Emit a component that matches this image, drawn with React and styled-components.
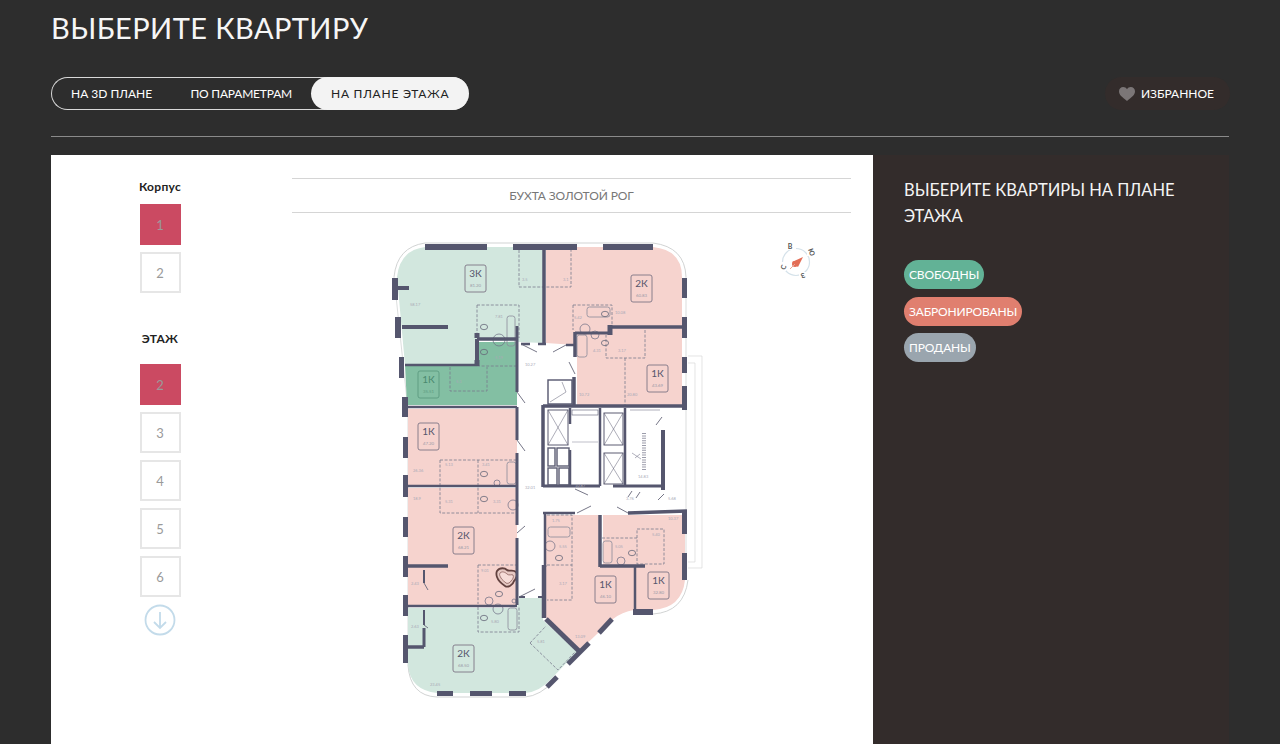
import React from "react";
import styled, { createGlobalStyle } from "styled-components";

const Global = createGlobalStyle`
  html, body { margin: 0; padding: 0; background: #2d2d2d; overflow: hidden; }
  * { box-sizing: border-box; }
  body { font-family: "Lato", "Noto Sans", "Liberation Sans", sans-serif; }
`;
const Page = styled.div`height: 744px; padding: 0 51px; overflow: hidden; color: #fff;`;
const Title = styled.h1`margin: 0; padding-top: 9px; height: 77px; font-size: 29px; line-height: 37px; font-weight: 400; letter-spacing: .42px; color: #f6f6f6;`;
const TopBar = styled.div`display: flex; justify-content: space-between; height: 60px; border-bottom: 1px solid #8a8a8a;`;
const Tabs = styled.div`display: flex; height: 33px; width: 418px; border: 1px solid #d8d8d8; border-right: none; border-radius: 17px;`;
const Tab = styled.div`
  display: flex; align-items: center; height: 33px; margin-top: -1px; font-size: 12px; white-space: nowrap;
  padding: 0 ${p => p.$active ? "20px" : "19px"};
  ${p => p.$first && "width: 120px;"}
  ${p => p.$mid && "width: 140px; letter-spacing: -.2px;"}
  ${p => p.$active && "background: #f3f3f3; color: #222; border-radius: 17px; width: 158px; letter-spacing: .75px;"}
`;
const Fav = styled.div`display: flex; align-items: center; gap: 6px; height: 33px; padding: 0 16px 0 14px; margin-right: -1px; border-radius: 17px; background: #332c2b; font-size: 12px;`;
const Body = styled.div`display: flex; margin-top: 18px; height: 589px;`;
const White = styled.div`display: flex; flex: none; width: 822px; background: #fff; padding-top: 23px;`;
const Side = styled.div`width: 218px; display: flex; flex-direction: column; align-items: center;`;
const SideTitle = styled.div`color: #222; font-size: 12px; font-weight: 700; line-height: 18px; margin-bottom: ${p => p.$mb}px; letter-spacing: .3px;`;
const Num = styled.div`
  width: 41px; height: 41px; margin-bottom: 7px; display: flex; align-items: center; justify-content: center;
  font-size: 13px; color: #9a9a9a;
  ${p => p.$active ? "background: #cb4a62;" : "border: 2px solid #e6e6e6; background: #fff;"}
`;
const Gap = styled.div`height: 30px;`;
const Arrow = styled.svg`display: block;`;
const PlanCol = styled.div`margin-left: 23px; width: 559px;`;
const PlanHead = styled.div`height: 35px; margin-bottom: 17px; display: flex; align-items: center; justify-content: center; border-top: 1px solid #d5d5d5; border-bottom: 1px solid #d5d5d5; color: #777; font-size: 12px; letter-spacing: -.1px;`;
const PlanSvg = styled.svg`display: block; margin-left: 88px;`;
const Info = styled.div`flex: 1; min-width: 0; background: #332c2b; padding: 22px 31px;`;
const InfoTitle = styled.div`font-size: 16.5px; line-height: 26px; font-weight: 400; width: 285px; color: #f4f4f4;`;
const Statuses = styled.div`display: flex; flex-direction: column; align-items: flex-start; gap: 7.5px; margin-top: 31px;`;
const Status = styled.div`height: 29px; display: flex; align-items: center; padding: 0 5px; border-radius: 15px; font-size: 12px; letter-spacing: -.15px; color: #fff; background: ${p => p.$c};`;

const rooms = [
  ["M397 277 Q400 250 425 247 L543 247 L543 343 L477 340 L477 365 L405 365 Z", "#d2e7de"],
  ["M477 342 L517 342 L517 405 L407 405 L405 365 L477 365 Z", "#83bfa3"],
  ["M546 247 L653 247 Q682 250 682 277 L682 327 L610 327 L610 332 L575 332 L575 345 L546 343 Z", "#f6d3ce"],
  ["M577 333 L610 333 L610 328 L682 328 L682 405 L577 405 Z", "#f6d3ce"],
  ["M408 409 L517 409 L517 485 L408 485 Z", "#f6d3ce"],
  ["M408 488 L517 488 L517 605 L408 605 Z", "#f6d3ce"],
  ["M408 608 L517 608 L519 598 L543 598 L543 620 L577 652 L553 677 Q540 692 525 693 L437 693 Q410 690 408 665 Z", "#d2e7de"],
  ["M546 515 L600 515 L600 567 L634 567 L634 610 Q622 612 613 619 L580 650 L546 618 Z", "#f6d3ce"],
  ["M603 515 L685 515 L685 580 Q682 608 653 610 L635 610 L635 567 L603 565 Z", "#f6d3ce"],
];
const blocks = [
  [425,244,62,6],[513,244,64,6],[603,244,50,6],[392,278,6,22],[395,317,6,21],[399,357,5,21],[402,397,6,20],[403,437,5,21],
  [403,475,5,22],[403,517,5,20],[403,556,5,21],[403,595,5,21],[403,635,5,28],[437,691,16,5],[470,691,22,5],[509,691,17,5],
  [633,609,20,6],[682,278,5,20],[682,317,5,21],[682,357,5,16],[682,386,5,24],[682,510,5,24],[682,553,5,27],
];
const diagBlocks = [[547,687,557,677],[568,664,589,643],[599,633,612,619]];
const walls = [
  [544,250,544,343,3.5],[398,288,409,288,4],[402,327,448,327,4],[405,365,477,365,2.5],[477,339,477,365,4],[477,339,517,339,3.5],
  [517,326,517,392,3],[517,407,517,440,3],[517,453,517,525,3],[517,538,517,605,3],[407,407,517,407,2.5],[408,486,517,486,2.5],
  [408,566,448,566,3.5],[408,606,517,606,2.5],[408,647,424,647,3.5],[424,628,424,647,3],[610,327,682,327,3.5],[575,333,610,333,3],
  [575,332,575,357,3.5],[574,377,574,405,3.5],[543,406,687,406,3.5],[543,405,543,487,3.5],[543,486,600,486,3],[613,486,663,486,3],
  [663,430,663,490,4],[625,408,625,486,2.5],[570,408,570,424,2.5],[600,408,600,486,2.5],[570,450,570,486,2.5],
  [543,513,575,513,2.5],[545,513,545,567,2.5],[544,565,544,618,4.5],[546,619,580,652,5],[600,515,600,567,3.5],[600,566,645,566,3.5],
  [635,567,635,610,2.5],[628,513,687,511,3.5],[521,344,530,344,2.5],[538,344,546,344,2.5],[566,345,575,345,2.5],[519,597,525,597,2],[538,597,543,597,2],
  [424,570,424,583,2],[424,610,424,625,2],[610,325,610,335,5],[477,333,477,338,5],[477,366,477,360,5],
];
const doors = [
  [521,344,537,352],[566,345,553,352],[569,362,575,374],[517,392,525,403],[517,440,525,451],[517,533,525,526],[519,597,535,589],
  [424,583,428,590],[424,625,428,628],[628,513,617,507],[577,513,591,506],[575,489,588,495],[628,497,632,491],[636,498,640,492],
  [658,500,664,494],[656,425,662,417],
];
const dashes = [
  "M519 250V287H571V250","M477 305H519V338M477 305V338","M573 305H612V327M573 305V330","M645 330V358H606V335","M625 358V405",
  "M450 367V391H487V367","M477 366H517","M440 460V513H517M440 460H517M478 460V513","M478 565H517M478 565V604","M478 607V632H519V607",
  "M530 643L546 626M530 643L558 670L575 652","M547 515H572V600H547M547 565H572","M602 538H637M637 529H664V564H637V529",
];
const tubs = [[507,316,8,30],[587,307,23,10],[577,335,10,22],[507,462,9,22],[548,527,22,10],[603,541,9,22],[508,608,9,22]];
const toilets = [[484,327],[605,343],[484,352],[484,474],[484,499],[499,594],[484,618],[559,558],[632,553],[605,314]];
const sinks = [[499,340,6],[585,329,5],[595,335,4],[497,483,3],[513,505,5],[550,546,5],[621,561,4],[489,601,4],[498,609,5],[514,601,2]];
const aptBadges = [
  [465,265,"3К","81.20",0],[631,275,"2К","60.83",0],[647,365,"1К","43.69",0],[418,371,"1К","35.51",1],[418,423,"1К","47.20",0],
  [453,527,"2К","68.21",0],[453,645,"2К","68.50",0],[595,576,"1К","46.10",0],[648,572,"1К","32.80",0],
];
const labels = [
  [410,306,"58.17"],[495,318,"7.81"],[495,359,"5.19"],[456,383,"5.3"],[525,366,"10.27"],[522,281,"3.5"],[563,281,"3.1"],[574,319,"5.42"],
  [615,314,"10.08"],[593,352,"4.31"],[618,352,"3.17"],[579,396,"10.72"],[627,396,"20.80"],[413,472,"26.36"],[445,466,"5.13"],[482,466,"3.41"],
  [413,500,"18.9"],[445,503,"5.31"],[493,503,"3.31"],[525,489,"32.01"],[481,572,"9.01"],[411,585,"2.43"],[411,628,"2.63"],[491,623,"5.80"],
  [430,686,"23.45"],[537,643,"5.81"],[575,487,"10.87"],[638,478,"14.83"],[552,522,"1.75"],[559,548,"5.55"],[559,585,"3.17"],[575,638,"13.09"],
  [626,500,"3.76"],[668,500,"5.68"],[668,520,"10.37"],[615,548,"5.05"],[652,536,"5.40"],
];

const Plan = () => (
  <PlanSvg width="450" height="480" viewBox="380 230 450 480" xmlns="http://www.w3.org/2000/svg">
    <path d="M394 277 Q397 247 425 243 L653 243 Q685 247 686 277 M408 665 Q410 696 437 697 L525 697 Q540 696 555 680 M636 614 L653 614 Q684 612 688 580" fill="none" stroke="#c5c8c8" strokeWidth=".8" />
    <path d="M394 277L408 410V665M686 277V580" fill="none" stroke="#c5c8c8" strokeWidth=".6" />
    <path d="M688 356H702V568H688M688 363H695V562H688" fill="none" stroke="#d8d8d8" strokeWidth=".7" />
    {rooms.map((r, i) => <path key={i} d={r[0]} fill={r[1]} />)}
    {dashes.map((d, i) => <path key={i} d={d} fill="none" stroke="#7a7b8e" strokeWidth=".8" strokeDasharray="3 1.6" />)}
    {tubs.map((t, i) => <rect key={i} x={t[0]} y={t[1]} width={t[2]} height={t[3]} rx="2.5" fill="none" stroke="#8b8b9b" strokeWidth=".8" />)}
    {toilets.map((t, i) => <ellipse key={i} cx={t[0]} cy={t[1]} rx="3.6" ry="2.7" fill="none" stroke="#666779" strokeWidth=".8" />)}
    {sinks.map((s, i) => <circle key={i} cx={s[0]} cy={s[1]} r={s[2]} fill="none" stroke="#6b6c82" strokeWidth=".7" />)}
    <path d="M497 571c3-4 8-3 10-1s6-1 9 2c2 3 0 7-2 9-1 4-6 7-9 5s-7-6-8-9-1-4 0-6z" fill="#e7c9c4" stroke="#62413f" strokeWidth="1.8" />
    <path d="M500 573c2-2 5-1 7 1s5 0 6 1c1 2 0 4-2 6-1 2-4 3-5 2s-4-3-5-5-2-3-1-5z" fill="#f6dcd8" stroke="#8a605c" strokeWidth=".8" />
    {walls.map((w, i) => <line key={i} x1={w[0]} y1={w[1]} x2={w[2]} y2={w[3]} stroke="#55566e" strokeWidth={w[4]} />)}
    {doors.map((d, i) => <line key={i} x1={d[0]} y1={d[1]} x2={d[2]} y2={d[3]} stroke="#666779" strokeWidth=".9" />)}
    {blocks.map((b, i) => <rect key={i} x={b[0]} y={b[1]} width={b[2]} height={b[3]} fill="#55566e" />)}
    {diagBlocks.map((b, i) => <line key={i} x1={b[0]} y1={b[1]} x2={b[2]} y2={b[3]} stroke="#55566e" strokeWidth="5" />)}
    <g fill="none" stroke="#5c5d73" strokeWidth="1">
      <rect x="548" y="380" width="24" height="24" stroke="#55566e" strokeWidth="1.4" />
      <path d="M550 402L566 392L562 382" strokeWidth=".5" />
      <rect x="548" y="410" width="20" height="35" /><path d="M548 410L568 445M568 410L548 445" strokeWidth=".5" />
      <rect x="604" y="413" width="19" height="32" /><path d="M604 413L623 445M623 413L604 445" strokeWidth=".5" />
      <rect x="604" y="453" width="19" height="31" /><path d="M604 453L623 484M623 453L604 484" strokeWidth=".5" />
      <rect x="548" y="448" width="7" height="18" strokeWidth="1.4" /><rect x="557" y="448" width="12" height="18" strokeWidth="1.4" />
      <rect x="548" y="468" width="9" height="17" strokeWidth="1.4" /><rect x="559" y="468" width="10" height="17" strokeWidth="1.4" />
      <rect x="572" y="410" width="26" height="5" strokeWidth=".6" />
      <path d="M572 442H598" strokeWidth=".4" />
    </g>
    <g stroke="#7a7b8e" strokeWidth=".6" fill="none">
      <path d="M645 433V470M643 433V470" strokeDasharray="1 1.4" strokeWidth="1.5" />
      <path d="M630 410H660M635 458L640 454M632 453L641 459" />
    </g>
    {aptBadges.map((b, i) => (
      <g key={i}>
        <rect x={b[0]} y={b[1]} width="21" height="27" rx="2" fill="none" stroke={b[4] ? "#5b9a80" : "#7d7484"} strokeWidth=".9" />
        <text x={b[0] + 10.5} y={b[1] + 12} textAnchor="middle" fontSize="10" fontWeight="400" fill={b[4] ? "#4b8a70" : "#55566c"}>{b[2]}</text>
        <text x={b[0] + 10.5} y={b[1] + 22} textAnchor="middle" fontSize="4.4" fill={b[4] ? "#5b9a80" : "#9b9aa8"}>{b[3]}</text>
      </g>
    ))}
    {labels.map((l, i) => <text key={i} x={l[0]} y={l[1]} fontSize="4" fill="#a9a9b6">{l[2]}</text>)}
    <g>
      <circle cx="796" cy="262" r="13.5" fill="none" stroke="#d5e2ea" strokeWidth="1.2" />
      <circle cx="795" cy="264" r="3" fill="#e36d56" />
      <path d="M792 262L803 257L798 267Z" fill="#e36d56" />
      <path d="M795 264L790 269" stroke="#e9a595" strokeWidth="1" />
      <g fontSize="7" fontWeight="700" fill="#555" textAnchor="middle">
        <rect x="786" y="242" width="10" height="8" fill="#fff" /><text x="790" y="249">В</text>
        <rect x="807" y="248" width="10" height="8" fill="#fff" /><text x="812" y="255" transform="rotate(70 812 252)">Ю</text>
        <rect x="778" y="262" width="8" height="9" fill="#fff" /><text x="783" y="270" transform="rotate(-70 783 267)">С</text>
        <rect x="799" y="272" width="8" height="9" fill="#fff" /><text x="803" y="279" transform="rotate(160 803 276)">З</text>
      </g>
    </g>
  </PlanSvg>
);

export default function App() {
  return (
    <Page>
      <Global />
      <Title>ВЫБЕРИТЕ КВАРТИРУ</Title>
      <TopBar>
        <Tabs>
          <Tab $first>НА 3D ПЛАНЕ</Tab>
          <Tab $mid>ПО ПАРАМЕТРАМ</Tab>
          <Tab $active>НА ПЛАНЕ ЭТАЖА</Tab>
        </Tabs>
        <Fav>
          <svg width="16" height="14" viewBox="0 0 16 14"><path d="M8 14C3 10 0 8 0 4.300C0 1.800 1.900 0 4.200 0C5.800 0 7.200.8 8 2.200C8.800.8 10.200 0 11.800 0C14.100 0 16 1.800 16 4.300C16 8 13 10 8 14Z" fill="#7b7677" /></svg>
          ИЗБРАННОЕ
        </Fav>
      </TopBar>
      <Body>
        <White>
          <Side>
            <SideTitle $mb={8}>Корпус</SideTitle>
            <Num $active>1</Num>
            <Num>2</Num>
            <Gap />
            <SideTitle $mb={16}>ЭТАЖ</SideTitle>
            <Num $active>2</Num>
            <Num>3</Num>
            <Num>4</Num>
            <Num>5</Num>
            <Num>6</Num>
            <Arrow width="32" height="32" viewBox="0 0 32 32" fill="none" stroke="#c3dbea" strokeWidth="1.8">
              <circle cx="16" cy="16" r="14.5" />
              <path d="M16 8V24M10 18L16 24L22 18" />
            </Arrow>
          </Side>
          <PlanCol>
            <PlanHead>БУХТА ЗОЛОТОЙ РОГ</PlanHead>
            <Plan />
          </PlanCol>
        </White>
        <Info>
          <InfoTitle>ВЫБЕРИТЕ КВАРТИРЫ НА ПЛАНЕ ЭТАЖА</InfoTitle>
          <Statuses>
            <Status $c="#62b296">СВОБОДНЫ</Status>
            <Status $c="#e07f6f">ЗАБРОНИРОВАНЫ</Status>
            <Status $c="#9aa5ae">ПРОДАНЫ</Status>
          </Statuses>
        </Info>
      </Body>
    </Page>
  );
}
